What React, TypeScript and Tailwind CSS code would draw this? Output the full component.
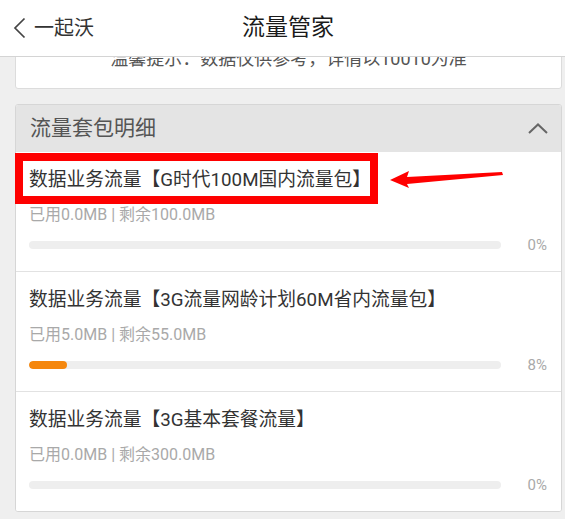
import React from "react";

const packages = [
  { name: "数据业务流量【G时代100M国内流量包】", used: "0.0MB", left: "100.0MB", pct: 0 },
  { name: "数据业务流量【3G流量网龄计划60M省内流量包】", used: "5.0MB", left: "55.0MB", pct: 8 },
  { name: "数据业务流量【3G基本套餐流量】", used: "0.0MB", left: "300.0MB", pct: 0 },
];

function PackageRow({ item, last }: any) {
  return (
    <div className={`pl-[13px] pr-[14px] pt-[16px] pb-[16px] bg-white ${last ? "" : "border-b border-[#e2e2e2]"}`}>
      <p className="text-[18.75px] leading-[24px] text-[#333]">{item.name}</p>
      <p className="mt-[13px] text-[16px] leading-[20px] text-[#a9a9a9]">
        已用{item.used} | 剩余{item.left}
      </p>
      <div className="mt-[10px] flex items-center h-[20px]">
        <div className="flex-1 h-[8px] rounded-full bg-[#eeeeee] overflow-hidden">
          <div className="h-full rounded-full bg-[#f5870d]" style={{ width: `${item.pct}%` }} />
        </div>
        <span className="w-[46px] text-right text-[15px] text-[#a9a9a9]">{item.pct}%</span>
      </div>
    </div>
  );
}

export default function App() {
  return (
    <div
      className="relative w-[565px] h-[519px] overflow-hidden bg-[#efefef]"
      style={{ fontFamily: 'Roboto, "Noto Sans CJK SC", sans-serif' }}
    >
      {/* top bar sits over the scrolled content */}
      <div className="absolute inset-x-0 top-0 z-10 h-[57px] bg-white border-b border-[#d4d4d4] flex items-center">
        <div className="flex items-center pl-[13px] text-[20px] text-[#333]">
          <svg width="13" height="22" viewBox="0 0 13 22" fill="none" stroke="#444" strokeWidth="1.7">
            <path d="M11.5 1.5 L2 11 L11.5 20.5" />
          </svg>
          <span className="ml-[8px]">一起沃</span>
        </div>
        <span className="absolute left-[242px] text-[23px] text-[#1a1a1a]">流量管家</span>
      </div>

      <div className="pl-[15px] pr-[3px] pt-[20px]">
        <div className="h-[69px] bg-white border border-[#dcdcdc] rounded-[3px] pt-[26px] text-center text-[18px] leading-[24px] text-[#555]">
          温馨提示：数据仅供参考，详情以10010为准
        </div>

        <div className="mt-[15px] bg-white border border-[#d6d6d6] rounded-[3px] overflow-hidden">
          <div className="h-[47px] bg-[#e4e4e4] flex items-center justify-between pl-[14px] pr-[13px]">
            <span className="text-[21px] text-[#555]">流量套包明细</span>
            <svg width="20" height="11" viewBox="0 0 20 11" fill="none" stroke="#666" strokeWidth="2">
              <path d="M1 10 L10 1.5 L19 10" />
            </svg>
          </div>
          {packages.map((p, i) => (
            <PackageRow key={i} item={p} last={i === packages.length - 1} />
          ))}
        </div>
      </div>

      {/* annotation: red box + arrow */}
      <div className="absolute left-[15px] top-[153px] w-[363px] h-[51px] border-[8px] border-[#fe0000]" />
      <svg className="absolute left-0 top-0" width="565" height="519" viewBox="0 0 565 519">
        <polygon points="390,180 409,171 407,177 502,172 503,175 407,184 409,188" fill="#f00" />
      </svg>
    </div>
  );
}
